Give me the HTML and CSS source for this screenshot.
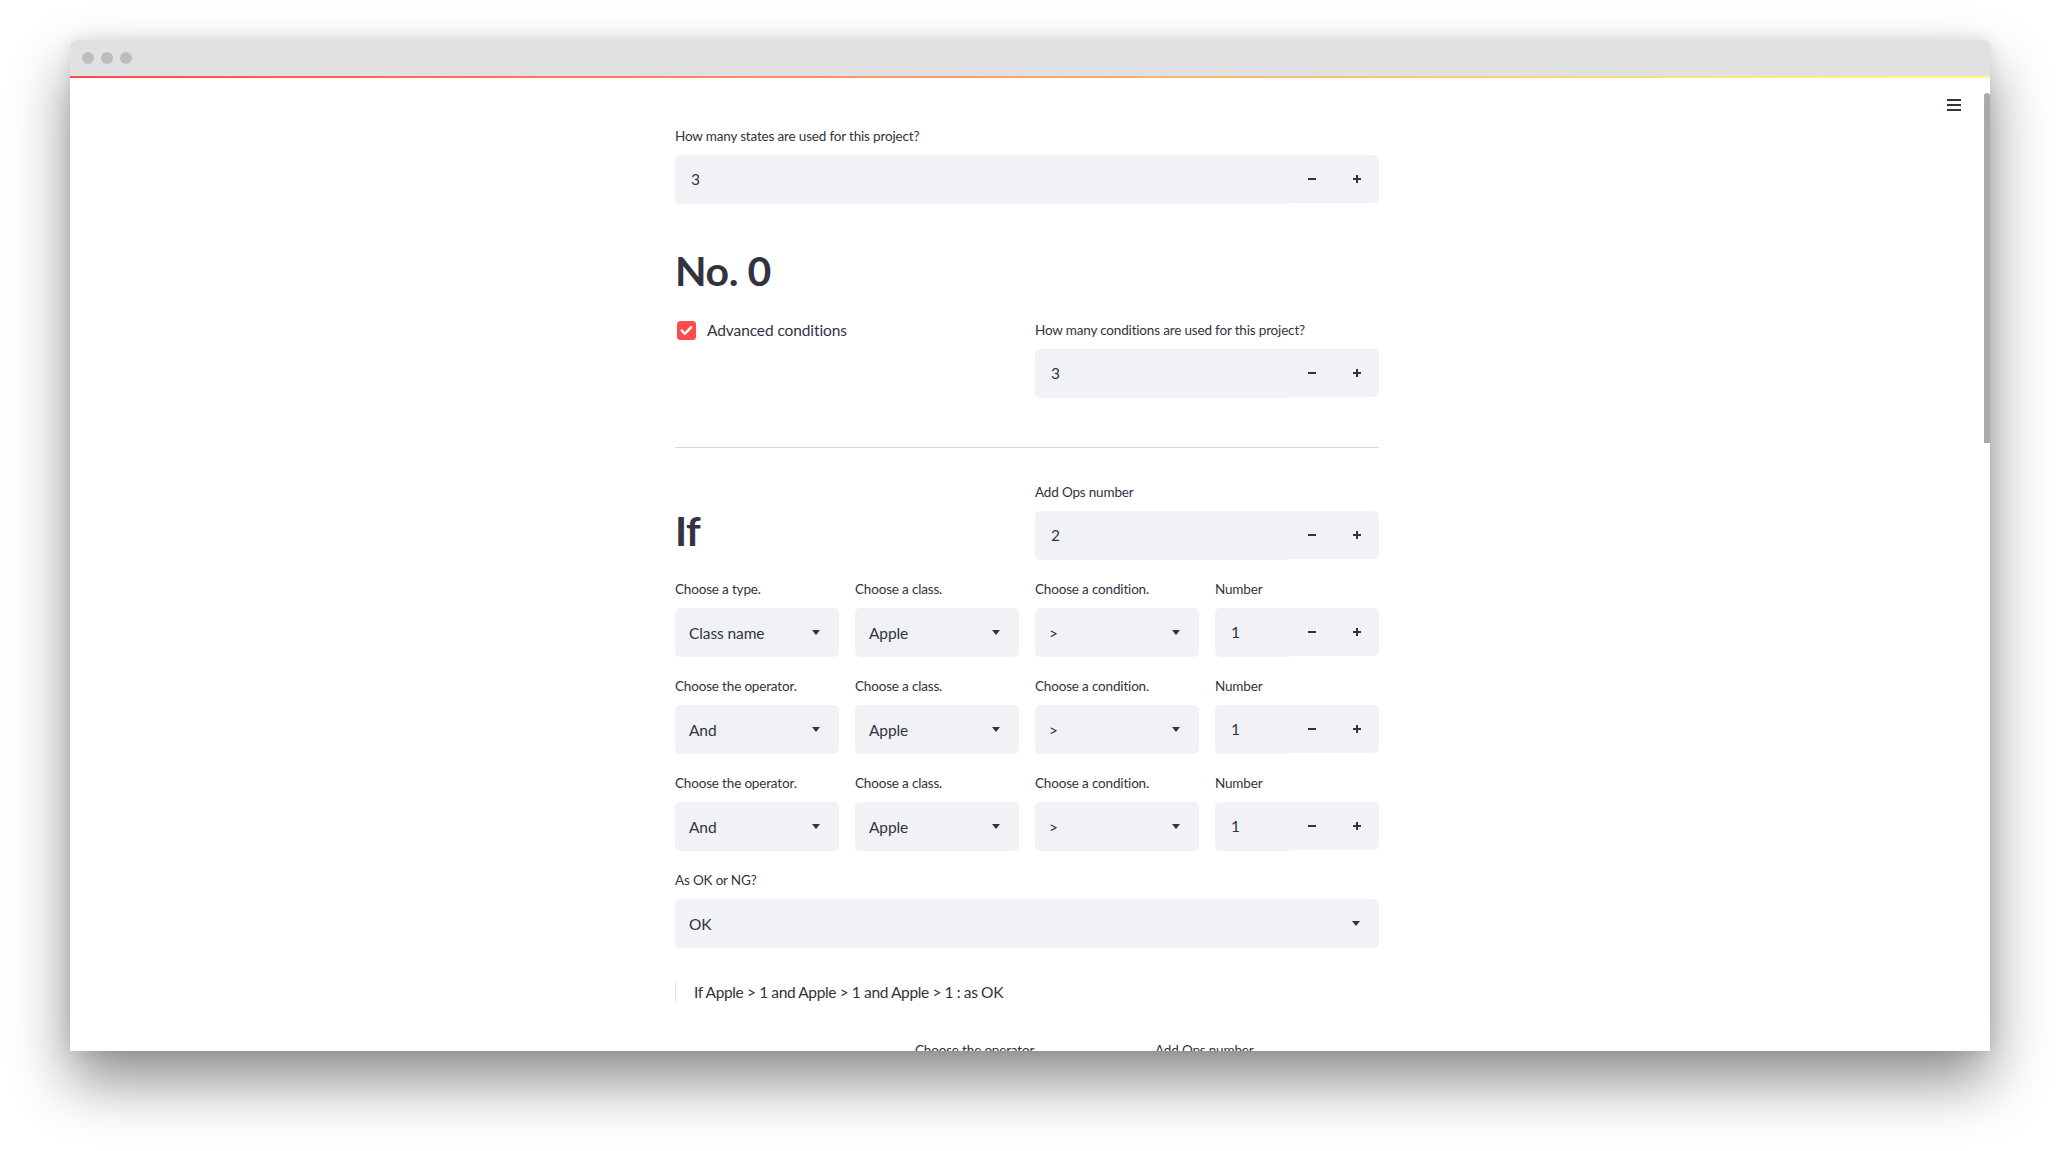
FILE: index.html
```html
<!DOCTYPE html>
<html lang="en">
<head>
<meta charset="utf-8">
<title>Streamlit app</title>
<link rel="stylesheet" href="styles.css">
</head>
<body>
<div class="stage">
  <div class="window">
    <div class="titlebar">
      <span class="dot"></span><span class="dot"></span><span class="dot"></span>
    </div>
    <div class="decoration"></div>
    <div class="app">
      <div class="main">
        <div class="header">
          <svg class="hamburger" width="14" height="12" viewBox="0 0 14 12"><rect x="0" y="0" width="14" height="2" fill="#31333F"/><rect x="0" y="5" width="14" height="2" fill="#31333F"/><rect x="0" y="10" width="14" height="2" fill="#31333F"/></svg>
        </div>
        <div class="block">
          <div class="widget">
            <div class="label">How many states are used for this project?</div>
            <div class="numinput">
              <div class="num-value">3</div>
              <div class="steps">
                <div class="step"><svg width="8" height="8" viewBox="0 0 8 8"><rect x="0" y="3" width="8" height="2" fill="#31333F"/></svg></div>
                <div class="step"><svg width="8" height="8" viewBox="0 0 8 8"><rect x="0" y="3" width="8" height="2" fill="#31333F"/><rect x="3" y="0" width="2" height="8" fill="#31333F"/></svg></div>
              </div>
            </div>
          </div>

          <h1 class="h1 h1-first">No. 0</h1>

          <div class="cols2 row-b">
            <div class="col">
              <label class="checkbox">
                <svg width="19" height="19" viewBox="0 0 19 19"><rect width="19" height="19" rx="3.5" fill="#FF4B4B"/><path d="M4.8 9.6l3 3.2 6.4-6.6" stroke="#fff" stroke-width="2.4" fill="none" stroke-linecap="round" stroke-linejoin="round"/></svg>
                <span class="checkbox-text">Advanced conditions</span>
              </label>
            </div>
            <div class="col widget">
              <div class="label">How many conditions are used for this project?</div>
              <div class="numinput">
                <div class="num-value">3</div>
                <div class="steps">
                  <div class="step"><svg width="8" height="8" viewBox="0 0 8 8"><rect x="0" y="3" width="8" height="2" fill="#31333F"/></svg></div>
                  <div class="step"><svg width="8" height="8" viewBox="0 0 8 8"><rect x="0" y="3" width="8" height="2" fill="#31333F"/><rect x="3" y="0" width="2" height="8" fill="#31333F"/></svg></div>
                </div>
              </div>
            </div>
          </div>

          <hr class="divider">

          <div class="cols2 row-c">
            <div class="col">
              <h1 class="h1 h1-if">If</h1>
            </div>
            <div class="col widget">
              <div class="label">Add Ops number</div>
              <div class="numinput">
                <div class="num-value">2</div>
                <div class="steps">
                  <div class="step"><svg width="8" height="8" viewBox="0 0 8 8"><rect x="0" y="3" width="8" height="2" fill="#31333F"/></svg></div>
                  <div class="step"><svg width="8" height="8" viewBox="0 0 8 8"><rect x="0" y="3" width="8" height="2" fill="#31333F"/><rect x="3" y="0" width="2" height="8" fill="#31333F"/></svg></div>
                </div>
              </div>
            </div>
          </div>

          <div class="cols4 row-cond">
            <div class="widget">
              <div class="label">Choose a type.</div>
              <div class="select"><span class="sel-value">Class name</span><svg class="caret" width="8" height="5" viewBox="0 0 8 5"><path d="M0 0h8L4 5z" fill="#31333F"/></svg></div>
            </div>
            <div class="widget">
              <div class="label">Choose a class.</div>
              <div class="select"><span class="sel-value">Apple</span><svg class="caret" width="8" height="5" viewBox="0 0 8 5"><path d="M0 0h8L4 5z" fill="#31333F"/></svg></div>
            </div>
            <div class="widget">
              <div class="label">Choose a condition.</div>
              <div class="select"><span class="sel-value">&gt;</span><svg class="caret" width="8" height="5" viewBox="0 0 8 5"><path d="M0 0h8L4 5z" fill="#31333F"/></svg></div>
            </div>
            <div class="widget">
              <div class="label">Number</div>
              <div class="numinput">
                <div class="num-value">1</div>
                <div class="steps">
                  <div class="step"><svg width="8" height="8" viewBox="0 0 8 8"><rect x="0" y="3" width="8" height="2" fill="#31333F"/></svg></div>
                  <div class="step"><svg width="8" height="8" viewBox="0 0 8 8"><rect x="0" y="3" width="8" height="2" fill="#31333F"/><rect x="3" y="0" width="2" height="8" fill="#31333F"/></svg></div>
                </div>
              </div>
            </div>
          </div>

          <div class="cols4 row-cond">
            <div class="widget">
              <div class="label">Choose the operator.</div>
              <div class="select"><span class="sel-value">And</span><svg class="caret" width="8" height="5" viewBox="0 0 8 5"><path d="M0 0h8L4 5z" fill="#31333F"/></svg></div>
            </div>
            <div class="widget">
              <div class="label">Choose a class.</div>
              <div class="select"><span class="sel-value">Apple</span><svg class="caret" width="8" height="5" viewBox="0 0 8 5"><path d="M0 0h8L4 5z" fill="#31333F"/></svg></div>
            </div>
            <div class="widget">
              <div class="label">Choose a condition.</div>
              <div class="select"><span class="sel-value">&gt;</span><svg class="caret" width="8" height="5" viewBox="0 0 8 5"><path d="M0 0h8L4 5z" fill="#31333F"/></svg></div>
            </div>
            <div class="widget">
              <div class="label">Number</div>
              <div class="numinput">
                <div class="num-value">1</div>
                <div class="steps">
                  <div class="step"><svg width="8" height="8" viewBox="0 0 8 8"><rect x="0" y="3" width="8" height="2" fill="#31333F"/></svg></div>
                  <div class="step"><svg width="8" height="8" viewBox="0 0 8 8"><rect x="0" y="3" width="8" height="2" fill="#31333F"/><rect x="3" y="0" width="2" height="8" fill="#31333F"/></svg></div>
                </div>
              </div>
            </div>
          </div>

          <div class="cols4 row-cond">
            <div class="widget">
              <div class="label">Choose the operator.</div>
              <div class="select"><span class="sel-value">And</span><svg class="caret" width="8" height="5" viewBox="0 0 8 5"><path d="M0 0h8L4 5z" fill="#31333F"/></svg></div>
            </div>
            <div class="widget">
              <div class="label">Choose a class.</div>
              <div class="select"><span class="sel-value">Apple</span><svg class="caret" width="8" height="5" viewBox="0 0 8 5"><path d="M0 0h8L4 5z" fill="#31333F"/></svg></div>
            </div>
            <div class="widget">
              <div class="label">Choose a condition.</div>
              <div class="select"><span class="sel-value">&gt;</span><svg class="caret" width="8" height="5" viewBox="0 0 8 5"><path d="M0 0h8L4 5z" fill="#31333F"/></svg></div>
            </div>
            <div class="widget">
              <div class="label">Number</div>
              <div class="numinput">
                <div class="num-value">1</div>
                <div class="steps">
                  <div class="step"><svg width="8" height="8" viewBox="0 0 8 8"><rect x="0" y="3" width="8" height="2" fill="#31333F"/></svg></div>
                  <div class="step"><svg width="8" height="8" viewBox="0 0 8 8"><rect x="0" y="3" width="8" height="2" fill="#31333F"/><rect x="3" y="0" width="2" height="8" fill="#31333F"/></svg></div>
                </div>
              </div>
            </div>
          </div>

          <div class="widget row-result">
            <div class="label">As OK or NG?</div>
            <div class="select"><span class="sel-value">OK</span><svg class="caret" width="8" height="5" viewBox="0 0 8 5"><path d="M0 0h8L4 5z" fill="#31333F"/></svg></div>
          </div>

          <div class="summary">If Apple &gt; 1 and Apple &gt; 1 and Apple &gt; 1 : as OK</div>

          <div class="cols3 row-next">
            <div class="col"></div>
            <div class="col"><div class="label">Choose the operator.</div></div>
            <div class="col"><div class="label">Add Ops number</div></div>
          </div>
        </div>
      </div>
      <div class="scrolltrack"><div class="thumb"></div></div>
    </div>
  </div>
</div>
</body>
</html>
```

FILE: styles.css
```css
* { box-sizing: border-box; }

html, body {
  margin: 0;
  padding: 0;
  background: #ffffff;
  height: 1151px;
  overflow: hidden;
}

body {
  font-family: Lato, "Source Sans Pro", "Liberation Sans", sans-serif;
  color: #31333F;
}

.stage {
  padding: 40px 0 0 70px;
}

.window {
  width: 1920px;
  height: 1011px;
  background: #ffffff;
  border-radius: 6px 6px 0 0;
  overflow: hidden;
  box-shadow: 0 30px 60px rgba(0, 0, 0, 0.45), 0 0 16px rgba(0, 0, 0, 0.10);
  display: flex;
  flex-direction: column;
}

.titlebar {
  height: 36px;
  background: #e1e1e1;
  display: flex;
  align-items: center;
  padding-left: 12px;
  gap: 7px;
  flex: none;
}

.dot {
  width: 12px;
  height: 12px;
  border-radius: 50%;
  background: #bdbdbd;
}

.decoration {
  height: 2px;
  flex: none;
  background: linear-gradient(90deg, #ff4b4b, #fffd80);
}

.app {
  flex: 1;
  display: flex;
  overflow: hidden;
}

.main {
  flex: 1;
  display: flex;
  flex-direction: column;
  overflow: hidden;
}

.header {
  height: 48px;
  flex: none;
  display: flex;
  justify-content: flex-end;
  align-items: flex-start;
  padding: 21px 23px 0 0;
}

.hamburger { display: block; }

.scrolltrack {
  width: 6px;
  flex: none;
  padding-top: 15px;
}

.thumb {
  width: 6px;
  height: 350px;
  background: #a9a9ae;
  border-radius: 3px 3px 0 0;
}

.block {
  width: 704px;
  margin: 0 auto;
  display: flex;
  flex-direction: column;
}

.widget {
  display: flex;
  flex-direction: column;
}

.label {
  font-size: 13.5px;
  line-height: 20px;
  height: 20px;
  margin-bottom: 9px;
  white-space: nowrap;
  letter-spacing: -0.17px;
  color: #31333F;
}

.numinput {
  height: 49px;
  display: flex;
  align-items: flex-start;
}

.num-value {
  flex: 1;
  height: 49px;
  background: #F0F2F6;
  border-radius: 5px 0 0 5px;
  padding-left: 16px;
  font-size: 15.5px;
  line-height: 49px;
}

.steps {
  display: flex;
  height: 48px;
  background: #F0F2F6;
  border-radius: 0 5px 5px 0;
}

.step {
  width: 45px;
  height: 48px;
  display: flex;
  align-items: center;
  justify-content: center;
}

.step svg { display: block; }

.select {
  height: 49px;
  background: #F0F2F6;
  border-radius: 5px;
  display: flex;
  align-items: center;
  padding-left: 14px;
}

.sel-value {
  flex: 1;
  font-size: 15.5px;
  line-height: 20px;
  letter-spacing: -0.1px;
}

.caret {
  display: block;
  margin-right: 19px;
  flex: none;
}

.h1 {
  margin: 0;
  font-size: 41px;
  line-height: 48px;
  font-weight: 700;
  letter-spacing: -0.4px;
  color: #31333F;
}

.h1-first { margin-top: 43px; }

.cols2 {
  display: grid;
  grid-template-columns: 1fr 1fr;
  column-gap: 16px;
}

.cols3 {
  display: grid;
  grid-template-columns: 1fr 1fr 1fr;
  column-gap: 16px;
}

.cols4 {
  display: grid;
  grid-template-columns: repeat(4, 1fr);
  column-gap: 16px;
}

.row-b { margin-top: 25px; }

.checkbox {
  display: flex;
  align-items: center;
  gap: 11px;
  height: 20px;
  padding-left: 2px;
}

.checkbox svg { display: block; flex: none; }

.checkbox-text {
  font-size: 15.5px;
  line-height: 20px;
  letter-spacing: -0.1px;
}

.divider {
  margin: 49px 0 0 0;
  border: 0;
  height: 1px;
  background: #d9d9dc;
}

.row-c { margin-top: 34px; }

.h1-if { margin-top: 25px; }

.row-cond { margin-top: 19px; }

.row-result { margin-top: 19px; }

.summary {
  margin-top: 32px;
  border-left: 1px solid #e8e8ea;
  padding-left: 18px;
  height: 24px;
  line-height: 24px;
  font-size: 15.5px;
  letter-spacing: -0.38px;
}

.row-next { margin-top: 36px; }
```
